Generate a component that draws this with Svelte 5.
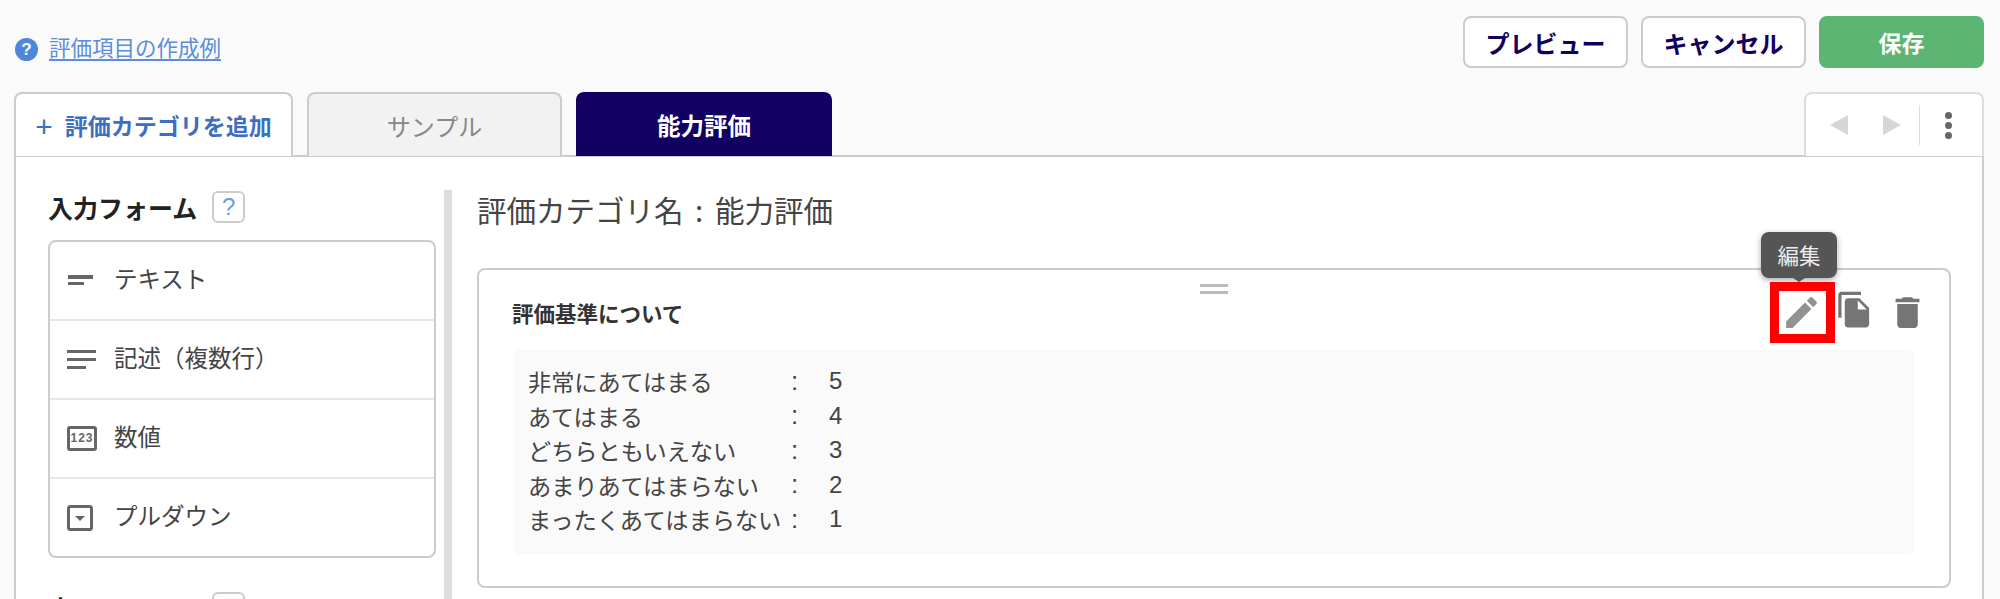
<script>
  const fields = [
    { label: 'テキスト', icon: 'short' },
    { label: '記述（複数行）', icon: 'long' },
    { label: '数値', icon: 'number' },
    { label: 'プルダウン', icon: 'select' }
  ];

  const scale = [
    { label: '非常にあてはまる', value: 5 },
    { label: 'あてはまる', value: 4 },
    { label: 'どちらともいえない', value: 3 },
    { label: 'あまりあてはまらない', value: 2 },
    { label: 'まったくあてはまらない', value: 1 }
  ];
</script>

<div class="page">
  <header class="top">
    <a class="guide" href="#guide">
      <span class="guide-icon">?</span>
      <span class="guide-text">評価項目の作成例</span>
    </a>
    <div class="top-buttons">
      <button class="btn">プレビュー</button>
      <button class="btn">キャンセル</button>
      <button class="btn save">保存</button>
    </div>
  </header>

  <div class="tabs">
    <button class="tab add"><span class="plus">+</span>評価カテゴリを追加</button>
    <button class="tab sample">サンプル</button>
    <button class="tab active">能力評価</button>
    <div class="tab-tools">
      <span class="arrow left"></span>
      <span class="arrow right"></span>
      <span class="tool-sep"></span>
      <span class="dots"><i></i><i></i><i></i></span>
    </div>
  </div>

  <section class="panel">
    <aside class="side">
      <h2 class="side-title">入力フォーム <span class="hint">?</span></h2>
      <ul class="field-list">
        {#each fields as field}
          <li class="field">
            <span class="field-icon">
              {#if field.icon === 'short'}
                <svg width="30" height="26" viewBox="0 0 30 26" fill="#666">
                  <rect x="1" y="7" width="25" height="4" />
                  <rect x="1" y="14" width="16" height="3" />
                </svg>
              {:else if field.icon === 'long'}
                <svg width="30" height="26" viewBox="0 0 30 26" fill="#666">
                  <rect x="0" y="3" width="29" height="3" />
                  <rect x="0" y="11" width="29" height="3" />
                  <rect x="0" y="19" width="19" height="3" />
                </svg>
              {:else if field.icon === 'number'}
                <span class="num-icon">123</span>
              {:else}
                <svg width="30" height="26" viewBox="0 0 30 26">
                  <rect x="1.5" y="1.5" width="23" height="23" rx="2" fill="none" stroke="#666" stroke-width="3" />
                  <path d="M8 11h10l-5 5z" fill="#666" />
                </svg>
              {/if}
            </span>
            <span class="field-label">{field.label}</span>
          </li>
        {/each}
      </ul>
      <h2 class="side-title next">表示フォーム <span class="hint">?</span></h2>
    </aside>

    <div class="side-rule"></div>

    <main class="main">
      <h1 class="cat-name">評価カテゴリ名 : 能力評価</h1>

      <article class="card">
        <span class="handle"></span>
        <div class="card-head">
          <h3 class="card-title">評価基準について</h3>
          <div class="actions">
            <span class="action edit">
              <span class="tooltip">編集</span>
              <span class="marker"></span>
              <svg width="41" height="41" viewBox="0 0 24 24" fill="#929292">
                <path d="M3 17.25V21h3.75L17.81 9.94l-3.75-3.75L3 17.25zM20.71 7.04c.39-.39.39-1.02 0-1.41l-2.34-2.34c-.39-.39-1.02-.39-1.41 0l-1.83 1.83 3.75 3.75 1.83-1.83z" />
              </svg>
            </span>
            <span class="action copy">
              <svg width="39" height="39" viewBox="0 0 24 24" fill="#757575">
                <path d="M16 1H4c-1.1 0-2 .9-2 2v14h2V3h12V1zm-1 4l6 6v10c0 1.1-.9 2-2 2H7.99C6.89 23 6 22.1 6 21l.01-14c0-1.1.89-2 1.99-2h7zm-1 7h5.5L14 6.5V12z" />
              </svg>
            </span>
            <span class="action">
              <svg width="41" height="41" viewBox="0 0 24 24" fill="#757575">
                <path d="M6 19c0 1.1.9 2 2 2h8c1.1 0 2-.9 2-2V7H6v12zM19 4h-3.5l-1-1h-5l-1 1H5v2h14V4z" />
              </svg>
            </span>
          </div>
        </div>

        <div class="scale">
          {#each scale as row}
            <div class="scale-row">
              <span class="scale-label">{row.label}</span>
              <span class="scale-colon">:</span>
              <span class="scale-value">{row.value}</span>
            </div>
          {/each}
        </div>
      </article>
    </main>
  </section>
</div>

<style>
  :global(body) {
    background: #fafafa;
    overflow: hidden;
  }

  .page {
    height: 599px;
    overflow: hidden;
    font-family: "Noto Sans CJK JP", "Liberation Sans", sans-serif;
    color: #333;
  }

  button {
    font-family: inherit;
    cursor: pointer;
  }

  /* header */
  .top {
    display: flex;
    align-items: flex-start;
    justify-content: space-between;
    height: 52px;
    padding: 16px 16px 0 15px;
  }

  .guide {
    display: flex;
    align-items: center;
    gap: 11px;
    margin-top: 17px;
    height: 28px;
    color: #5b8ddb;
    text-decoration: none;
  }

  .guide-icon {
    width: 23px;
    height: 23px;
    margin-top: 5px;
    border-radius: 50%;
    background: #4e86d9;
    color: #fff;
    font: bold 17px/23px "Liberation Sans", sans-serif;
    text-align: center;
  }

  .guide-text {
    font-size: 21.5px;
    line-height: 28px;
    text-decoration: underline;
    text-underline-offset: 3px;
  }

  .top-buttons {
    display: flex;
    gap: 13px;
  }

  .btn {
    width: 165px;
    height: 52px;
    padding: 0;
    border: 2px solid #ccc;
    border-radius: 8px;
    background: #fff;
    color: #12005f;
    font-size: 24px;
    font-weight: 700;
  }

  .btn.save {
    background: #5cb572;
    border-color: #5cb572;
    color: #fff;
    font-size: 23px;
  }

  /* tabs */
  .tabs {
    display: flex;
    gap: 14px;
    height: 64px;
    margin-top: 24px;
    padding: 0 16px 0 14px;
  }

  .tab {
    height: 64px;
    padding: 0;
    border: 2px solid #ccc;
    border-bottom: none;
    border-radius: 8px 8px 0 0;
    font-size: 23px;
  }

  .tab.add {
    width: 279px;
    background: #fff;
    color: #3d6fc0;
    font-weight: 700;
  }

  .plus {
    margin-right: 12px;
    font: 400 30px/1 "Liberation Sans", sans-serif;
    vertical-align: -2px;
  }

  .tab.sample {
    width: 255px;
    background: #f2f2f2;
    color: #888;
    font-size: 24px;
  }

  .tab.active {
    width: 256px;
    background: #120062;
    border-color: #120062;
    color: #fff;
    font-weight: 700;
    font-size: 23.5px;
  }

  .tab-tools {
    display: flex;
    align-items: center;
    width: 180px;
    height: 64px;
    margin-left: auto;
    border: 2px solid #ddd;
    border-bottom: none;
    border-radius: 8px 8px 0 0;
    background: #fff;
    box-sizing: border-box;
  }

  .arrow {
    width: 0;
    height: 0;
    border-top: 10px solid transparent;
    border-bottom: 10px solid transparent;
  }

  .arrow.left {
    margin-left: 24px;
    border-right: 18px solid #d6d6d6;
  }

  .arrow.right {
    margin-left: 35px;
    border-left: 18px solid #d6d6d6;
  }

  .tool-sep {
    width: 1px;
    height: 40px;
    margin-left: 18px;
    background: #ddd;
  }

  .dots {
    display: flex;
    flex-direction: column;
    gap: 3px;
    margin-left: 25px;
  }

  .dots i {
    width: 7px;
    height: 7px;
    border-radius: 50%;
    background: #666;
  }

  /* panel */
  .panel {
    display: flex;
    margin: 0 16px 0 14px;
    padding: 33px 31px 0 32px;
    min-height: 500px;
    border: 2px solid #ccc;
    border-width: 2px 2px 0;
    background: #fff;
    box-sizing: border-box;
    margin-top: -1px;
  }

  .side {
    width: 388px;
    flex-shrink: 0;
  }

  .side-title {
    display: flex;
    align-items: center;
    gap: 15px;
    height: 34px;
    margin: 0;
    font-size: 25px;
    font-weight: 700;
    color: #222;
  }

  .side-title.next {
    margin-top: 33px;
  }

  .hint {
    width: 33px;
    height: 32px;
    box-sizing: border-box;
    border: 2px solid #ccc;
    border-radius: 6px;
    color: #6b9be8;
    font: 400 24px/28px "Liberation Sans", sans-serif;
    text-align: center;
  }

  .field-list {
    list-style: none;
    margin: 16px 0 0;
    padding: 0;
    border: 2px solid #ccc;
    border-radius: 8px;
  }

  .field {
    display: flex;
    align-items: center;
    height: 77px;
    padding-left: 17px;
    border-top: 2px solid #e6e6e6;
    font-size: 23.5px;
    color: #444;
  }

  .field:first-child {
    border-top: none;
  }

  .field-icon {
    display: flex;
    width: 47px;
    flex-shrink: 0;
  }

  .field-label {
    margin-top: -5px;
  }

  .num-icon {
    width: 30px;
    height: 25px;
    box-sizing: border-box;
    border: 3px solid #666;
    border-radius: 3px;
    color: #666;
    font: 700 12px/19px "Liberation Sans", sans-serif;
    letter-spacing: 1px;
    text-align: center;
  }

  .side-rule {
    width: 8px;
    margin-left: 8px;
    flex-shrink: 0;
    background: #ddd;
  }

  .main {
    flex: 1;
    min-width: 0;
    margin-left: 25px;
  }

  .cat-name {
    margin: 0;
    height: 78px;
    font-size: 29.5px;
    line-height: 38px;
    font-weight: 400;
    word-spacing: 5px;
    color: #444;
  }

  .card {
    position: relative;
    height: 320px;
    box-sizing: border-box;
    padding: 28px 34px 0;
    border: 2px solid #ccc;
    border-radius: 8px;
  }

  .handle {
    position: absolute;
    left: 50%;
    top: 14px;
    width: 28px;
    height: 4px;
    margin-left: -14px;
    border-top: 3px solid #bbb;
    border-bottom: 3px solid #bbb;
  }

  .card-head {
    display: flex;
    align-items: center;
    justify-content: space-between;
    height: 28px;
  }

  .card-title {
    margin: 0 0 0 -1px;
    font-size: 21.5px;
    font-weight: 700;
    color: #333;
  }

  .actions {
    display: flex;
    align-items: center;
    gap: 13px;
    margin-right: -13px;
  }

  .action {
    position: relative;
    display: flex;
  }

  .action.copy {
    margin-top: -5px;
  }

  .tooltip {
    position: absolute;
    left: -20px;
    top: -60px;
    width: 76px;
    height: 46px;
    border-radius: 8px;
    background: #555;
    color: #eee;
    font-size: 21.5px;
    line-height: 46px;
    text-align: center;
    box-shadow: 0 2px 6px rgba(0, 0, 0, 0.35);
  }

  .tooltip::after {
    content: "";
    position: absolute;
    left: 32px;
    bottom: -4px;
    border-top: 4px solid #555;
    border-left: 6px solid transparent;
    border-right: 6px solid transparent;
  }

  .marker {
    position: absolute;
    left: -11px;
    top: -10px;
    width: 47px;
    height: 43px;
    border: 9px solid #f00;
  }

  .marker + svg {
    position: relative;
  }

  .scale {
    margin-top: 23px;
    height: 206px;
    box-sizing: border-box;
    padding: 15px 15px;
    border-radius: 6px;
    background: #fafafa;
  }

  .scale-row {
    display: flex;
    height: 34.5px;
    align-items: center;
    font-size: 23.2px;
    color: #444;
  }

  .scale-label {
    width: 263px;
    white-space: nowrap;
  }

  .scale-colon {
    width: 38px;
    font-family: "Liberation Sans", sans-serif;
    font-size: 26px;
  }

  .scale-value {
    font-family: "Liberation Sans", sans-serif;
    font-size: 24px;
  }
</style>
